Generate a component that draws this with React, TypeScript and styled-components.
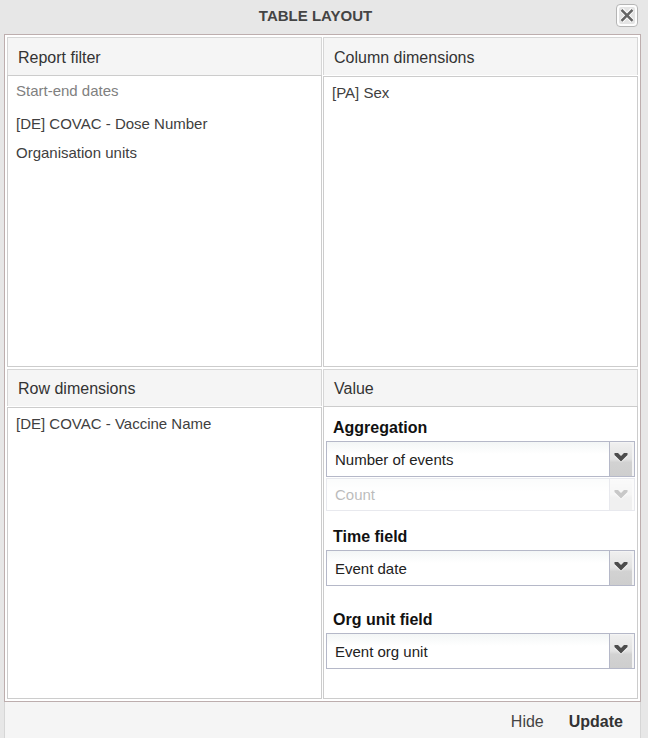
import React, { useId } from "react";
import styled, { createGlobalStyle } from "styled-components";

const GlobalStyle = createGlobalStyle`
  *, *::before, *::after { box-sizing: border-box; }
  body {
    margin: 0;
    background: #e7e7e7;
    font-family: "Liberation Sans", Arial, Helvetica, sans-serif;
    color: #333;
  }
  button, select { font-family: inherit; }
`;

const Dialog = styled.div`
  display: flex;
  flex-direction: column;
  min-height: 100vh;
  padding: 0 7px 0 4px;
`;

const TitleBar = styled.header`
  display: flex;
  align-items: flex-start;
  height: 34px;
  padding: 4px 3px 0 11px;
`;

const Title = styled.h1`
  flex: 1;
  margin: 0;
  font-size: 15px;
  line-height: 24px;
  text-align: center;
  color: #444;
`;

const CloseButton = styled.button`
  display: block;
  width: 22px;
  height: 23px;
  padding: 0;
  border: 0;
  background: none;
  cursor: pointer;

  svg { display: block; }
`;

const Panels = styled.main`
  flex: 1;
  display: grid;
  grid-template-columns: 1fr 1fr;
  grid-template-rows: 1fr 1fr;
  gap: 2px 1px;
  padding: 2px;
  border: 1px solid #bdaeae;
  background: #fff;
`;

const PanelBox = styled.section<{ $gap: number }>`
  display: flex;
  flex-direction: column;
  gap: ${(p) => p.$gap}px;
  min-width: 0;
`;

const PanelTitle = styled.h2<{ $height: number }>`
  margin: 0;
  padding: 2px 10px 0;
  border: 1px solid #d6d6d6;
  border-bottom: 0;
  background: #f5f5f5;
  font-size: 16px;
  font-weight: 400;
  line-height: ${(p) => p.$height - 2}px;
  color: #333;
`;

const PanelBody = styled.div`
  flex: 1;
  border: 1px solid #ccc;
  background: #fff;
`;

const DimensionList = styled.ul`
  margin: 0;
  padding: 1px 8px;
  list-style: none;
`;

const Dimension = styled.li<{ $fixed?: boolean }>`
  margin-bottom: ${(p) => (p.$fixed ? 5 : 0)}px;
  font-size: 15px;
  line-height: ${(p) => (p.$fixed ? 27 : 29)}px;
  color: ${(p) => (p.$fixed ? "#808080" : "#404040")};
`;

const ValueForm = styled.div`
  display: flex;
  flex-direction: column;
  padding: 10px 2px;
`;

const FieldLabel = styled.label<{ $space?: number }>`
  margin-top: ${(p) => p.$space ?? 0}px;
  margin-bottom: 2px;
  padding-left: 7px;
  font-size: 16px;
  font-weight: 700;
  line-height: 22px;
  color: #111;
`;

const Combo = styled.div<{ $disabled?: boolean }>`
  display: grid;
  grid-template-columns: 1fr 25px;
  height: ${(p) => (p.$disabled ? 33 : 36)}px;
  margin-top: ${(p) => (p.$disabled ? 1 : 0)}px;
  border: 1px solid #b5b8c8;
  opacity: ${(p) => (p.$disabled ? 0.3 : 1)};
  background: linear-gradient(#f3f6f6, #fff 12px);
`;

const ComboSelect = styled.select`
  grid-area: 1 / 1 / 2 / 3;
  appearance: none;
  width: 100%;
  padding: 0 30px 0 8px;
  border: 0;
  background: transparent;
  font-size: 15px;
  color: #222;
  opacity: 1;
`;

const Trigger = styled.span`
  grid-area: 1 / 2;
  display: flex;
  justify-content: center;
  padding: 10px 2px 0 0;
  border-left: 1px solid #b5b8c8;
  box-shadow: inset -2px 1px #f4f4f4;
  border-radius: 0 3px 0 0;
  background: linear-gradient(#f0f0f0, #e2e2e2 50%, #d2d2d2 60%, #cecece);
  pointer-events: none;
`;

const Footer = styled.footer`
  display: flex;
  justify-content: flex-end;
  align-items: center;
  gap: 25px;
  height: 36px;
  padding: 4px 17px 0;
  border: solid #d6d6d6;
  border-width: 0 1px;
  background: #f5f5f5;
`;

const TextButton = styled.button<{ $strong?: boolean }>`
  padding: 0;
  border: 0;
  background: none;
  font-size: 16px;
  font-weight: ${(p) => (p.$strong ? 700 : 400)};
  color: ${(p) => (p.$strong ? "#333" : "#444")};
  cursor: pointer;
`;

const CloseIcon = () => (
  <svg width="22" height="23" viewBox="0 0 22 23" aria-hidden="true">
    <rect x="0.5" y="0.5" width="21" height="22" rx="3.5" fill="#fdfdfd" stroke="#b5b5b5" />
    <rect x="3" y="3" width="16" height="17" rx="2" fill="#e4e4e4" />
    <path d="M5.5 5.5 16.5 17M16.5 5.5 5.5 17" stroke="#fff" strokeWidth="4.5" />
    <path d="M5.5 5.8 16.5 16.8M16.5 5.8 5.5 16.8" stroke="#666" strokeWidth="2.6" />
  </svg>
);

const ArrowIcon = () => (
  <svg width="14" height="11" viewBox="0 0 14 11" aria-hidden="true">
    <path d="M0.5 3.2 7 8 13.5 3.2V4.4L7 10.6 0.5 4.4Z" fill="#fff" opacity="0.7" />
    <path d="M0.5 1H4L7 4 10 1H13.5V3L7 9.4 0.5 3Z" fill="#4c4c4c" />
  </svg>
);

type PanelProps = {
  title: string;
  height: number;
  gap?: number;
  children: React.ReactNode;
};

const Panel = ({ title, height, gap = 0, children }: PanelProps) => (
  <PanelBox $gap={gap}>
    <PanelTitle $height={height}>{title}</PanelTitle>
    <PanelBody>{children}</PanelBody>
  </PanelBox>
);

type ComboBoxProps = { id?: string; value: string; disabled?: boolean; name?: string };

const ComboBox = ({ id, value, disabled, name }: ComboBoxProps) => (
  <Combo $disabled={disabled}>
    <ComboSelect id={id} aria-label={name} disabled={disabled} defaultValue={value}>
      <option>{value}</option>
    </ComboSelect>
    <Trigger>
      <ArrowIcon />
    </Trigger>
  </Combo>
);

export default function App() {
  const id = useId();
  return (
    <>
      <GlobalStyle />
      <Dialog role="dialog" aria-labelledby={`${id}title`}>
        <TitleBar>
          <Title id={`${id}title`}>TABLE LAYOUT</Title>
          <CloseButton aria-label="Close">
            <CloseIcon />
          </CloseButton>
        </TitleBar>
        <Panels>
          <Panel title="Report filter" height={37}>
            <DimensionList>
              <Dimension $fixed>Start-end dates</Dimension>
              <Dimension>[DE] COVAC - Dose Number</Dimension>
              <Dimension>Organisation units</Dimension>
            </DimensionList>
          </Panel>
          <Panel title="Column dimensions" height={37} gap={1}>
            <DimensionList>
              <Dimension>[PA] Sex</Dimension>
            </DimensionList>
          </Panel>
          <Panel title="Row dimensions" height={36} gap={1}>
            <DimensionList>
              <Dimension>[DE] COVAC - Vaccine Name</Dimension>
            </DimensionList>
          </Panel>
          <Panel title="Value" height={36}>
            <ValueForm>
              <FieldLabel htmlFor={`${id}agg`}>Aggregation</FieldLabel>
              <ComboBox id={`${id}agg`} value="Number of events" />
              <ComboBox value="Count" name="Aggregation type" disabled />
              <FieldLabel htmlFor={`${id}time`} $space={15}>Time field</FieldLabel>
              <ComboBox id={`${id}time`} value="Event date" />
              <FieldLabel htmlFor={`${id}org`} $space={23}>Org unit field</FieldLabel>
              <ComboBox id={`${id}org`} value="Event org unit" />
            </ValueForm>
          </Panel>
        </Panels>
        <Footer>
          <TextButton>Hide</TextButton>
          <TextButton $strong>Update</TextButton>
        </Footer>
      </Dialog>
    </>
  );
}
